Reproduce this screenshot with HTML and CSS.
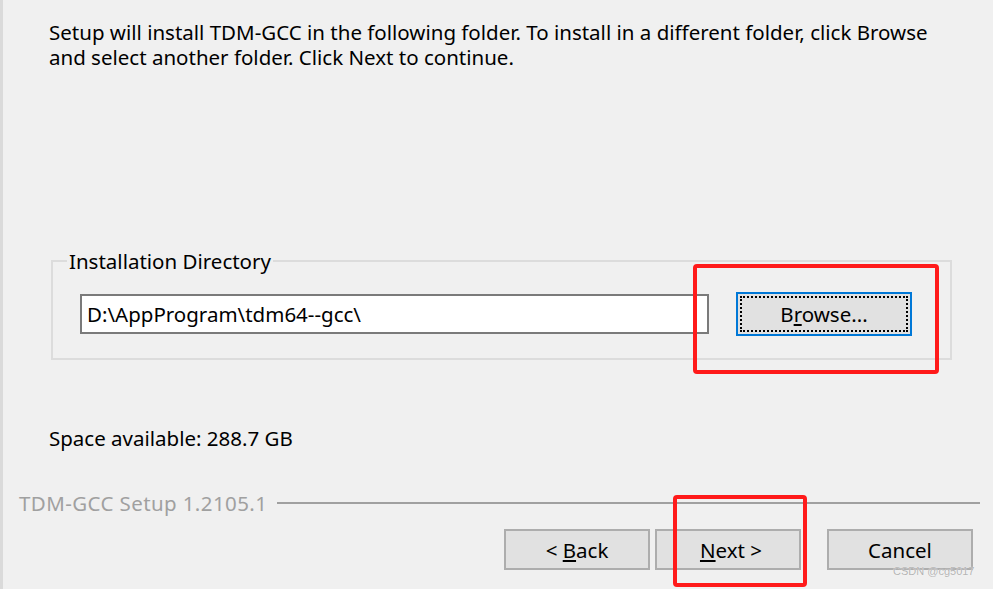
FILE: index.html
```html
<!DOCTYPE html>
<html>
<head>
<meta charset="utf-8">
<link rel="stylesheet" href="styles.css">
</head>
<body>
<div class="page">
  <div class="main">
    <p class="intro">Setup will install TDM-GCC in the following folder. To install in a different folder, click Browse<br>and select another folder. Click Next to continue.</p>
    <fieldset class="group">
      <legend>Installation Directory</legend>
      <div class="dir-row">
        <div class="input">D:\AppProgram\tdm64--gcc\</div>
        <div class="btn browse"><span class="focus"><span>B<u>r</u>owse...</span></span></div>
      </div>
    </fieldset>
    <p class="space">Space available: 288.7 GB</p>
  </div>
  <div class="brand">
    <span class="brand-text">TDM-GCC Setup 1.2105.1</span>
    <span class="brand-line"></span>
  </div>
  <div class="buttons">
    <div class="btn nav"><span>&lt; <u>B</u>ack</span></div>
    <div class="btn nav"><span class="next-label"><u>N</u>ext &gt;</span></div>
    <div class="btn nav cancel"><span>Cancel</span></div>
  </div>
  <div class="mark mark-browse"></div>
  <div class="mark mark-next"></div>
  <div class="watermark">CSDN @cg5017</div>
</div>
</body>
</html>
```

FILE: styles.css
```css
* { box-sizing: border-box; }
html, body {
  margin: 0;
  padding: 0;
  background: #f0f0f0;
}
body {
  font-family: "Noto Sans", "Open Sans", sans-serif;
  font-size: 20.5px;
  color: #000;
}
.page {
  position: relative;
  width: 993px;
  height: 589px;
  overflow: hidden;
  border-left: 3px solid #dadada;
  background: #f0f0f0;
}
.main {
  padding: 20px 0 0 46px;
}
.intro {
  margin: 0;
  line-height: 25px;
  white-space: nowrap;
}
.group {
  margin: 180px 41px 0 2px;
  border: 2px solid #dcdcdc;
  padding: 20px 35px 22px 27px;
}
.group legend {
  margin-left: -13px;
  padding: 0 2px;
  line-height: 22px;
}
.dir-row {
  display: flex;
  align-items: center;
  gap: 27px;
}
.input {
  flex: none;
  width: 629px;
  height: 40px;
  border: 2px solid #7a7a7a;
  background: #fff;
  padding: 0 0 0 5px;
  line-height: 36px;
}
.btn {
  flex: none;
  background: #e1e1e1;
  border: 2px solid #adadad;
  display: flex;
  align-items: center;
  justify-content: center;
}
.browse {
  width: 176px;
  height: 44px;
  border-color: #0078d7;
  padding: 2px;
}
.browse .focus {
  width: 100%;
  height: 100%;
  border: 2px dotted #000;
  display: flex;
  align-items: center;
  justify-content: center;
}
.space {
  margin: 66px 0 0 0;
  line-height: 24px;
}
.brand {
  display: flex;
  align-items: center;
  margin: 41px 13px 0 16px;
}
.brand-text {
  color: #a0a0a0;
  line-height: 24px;
  letter-spacing: 0.4px;
}
.brand-line {
  flex: 1;
  height: 2px;
  background: #a0a0a0;
  margin-left: 10px;
}
.buttons {
  display: flex;
  justify-content: flex-end;
  gap: 5px;
  margin: 14px 20px 0 0;
}
.nav {
  width: 146px;
  height: 41px;
}
.next-label {
  margin-left: 6px;
}
.nav.cancel {
  margin-left: 21px;
}
.mark {
  position: absolute;
  border: 4px solid #ff1a1a;
  border-radius: 4px;
}
.mark-browse {
  left: 690px;
  top: 264px;
  width: 246px;
  height: 110px;
}
.mark-next {
  left: 670px;
  top: 495px;
  width: 134px;
  height: 92px;
}
.watermark {
  position: absolute;
  left: 890px;
  top: 565px;
  font-family: "Liberation Sans", sans-serif;
  font-size: 11px;
  color: #b4b4b4;
  text-shadow: 0 0 1px #fff;
}
```
